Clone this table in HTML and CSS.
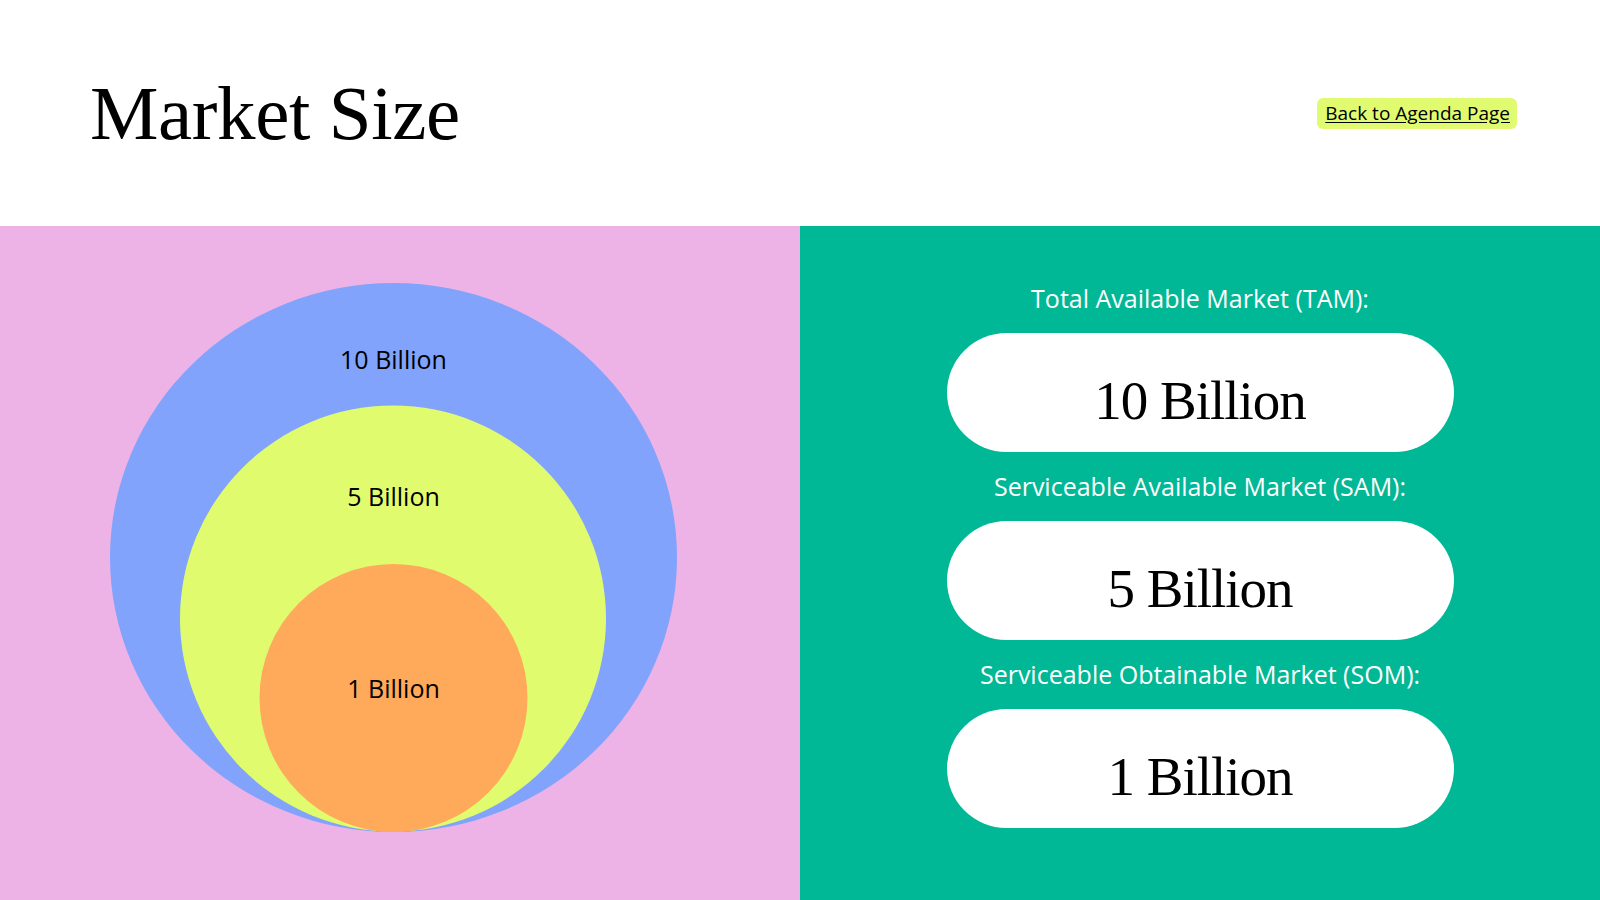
FILE: index.html
```html
<!DOCTYPE html>
<html lang="en">
<head>
<meta charset="utf-8">
<title>Market Size</title>
<link rel="stylesheet" href="styles.css">
</head>
<body>
<div class="slide">
  <header class="top">
    <h1 class="title">Market Size</h1>
    <a class="back" href="#">Back to Agenda Page</a>
  </header>
  <main class="content">
    <section class="diagram">
      <svg class="circles" width="800" height="674" viewBox="0 0 800 674" xmlns="http://www.w3.org/2000/svg">
        <ellipse class="c-tam" cx="393.5" cy="331.5" rx="283.5" ry="274.5"/>
        <circle class="c-sam" cx="393" cy="392.5" r="213"/>
        <circle class="c-som" cx="393.5" cy="472" r="134"/>
        <text class="c-label" x="393.5" y="143">10 Billion</text>
        <text class="c-label" x="393.5" y="280">5 Billion</text>
        <text class="c-label" x="393.5" y="472">1 Billion</text>
      </svg>
    </section>
    <section class="metrics">
      <div class="metric">
        <p class="metric-label">Total Available Market (TAM):</p>
        <div class="pill">10 Billion</div>
      </div>
      <div class="metric">
        <p class="metric-label">Serviceable Available Market (SAM):</p>
        <div class="pill">5 Billion</div>
      </div>
      <div class="metric">
        <p class="metric-label">Serviceable Obtainable Market (SOM):</p>
        <div class="pill">1 Billion</div>
      </div>
    </section>
  </main>
</div>
</body>
</html>
```

FILE: styles.css
```css
* {
  box-sizing: border-box;
}

html, body {
  margin: 0;
  padding: 0;
  background: #ffffff;
}

.slide {
  width: 1600px;
  height: 900px;
  overflow: hidden;
  display: flex;
  flex-direction: column;
}

.top {
  height: 226px;
  flex: 0 0 226px;
  display: flex;
  align-items: center;
  justify-content: space-between;
  padding: 0 83px 0 90px;
  background: #ffffff;
}

.title {
  margin: 0;
  font-family: "Liberation Serif", "Times New Roman", serif;
  font-weight: normal;
  font-size: 77px;
  line-height: 1;
  letter-spacing: -0.4px;
  color: #000000;
}

.back {
  display: block;
  padding: 3px 7px 3px 8px;
  border-radius: 6px;
  background: #e0fb70;
  color: #000000;
  font-family: "Open Sans", "Liberation Sans", sans-serif;
  font-size: 19px;
  line-height: 25px;
  text-decoration: underline;
  text-underline-offset: 2px;
}

.content {
  flex: 1 1 auto;
  display: grid;
  grid-template-columns: 1fr 1fr;
}

.diagram {
  background: #edb3e6;
}

.circles {
  display: block;
}

.c-tam {
  fill: #82a3fc;
}

.c-sam {
  fill: #e0fc6e;
}

.c-som {
  fill: #ffa95a;
}

.c-label {
  font-family: "Open Sans", "Liberation Sans", sans-serif;
  font-size: 25px;
  fill: #000000;
  text-anchor: middle;
}

.metrics {
  background: #00b796;
  display: flex;
  flex-direction: column;
  align-items: center;
  gap: 17px;
  padding-top: 55px;
}

.metric {
  display: flex;
  flex-direction: column;
  align-items: center;
  gap: 18px;
}

.metric-label {
  margin: 0;
  font-family: "Open Sans", "Liberation Sans", sans-serif;
  font-size: 25px;
  line-height: 34px;
  color: #ffffff;
}

.pill {
  width: 507px;
  height: 119px;
  border-radius: 60px;
  background: #ffffff;
  display: flex;
  align-items: center;
  justify-content: center;
  padding-top: 15px;
  font-family: "Liberation Serif", "Times New Roman", serif;
  font-size: 55px;
  line-height: 1;
  letter-spacing: -1px;
  color: #000000;
}
```
